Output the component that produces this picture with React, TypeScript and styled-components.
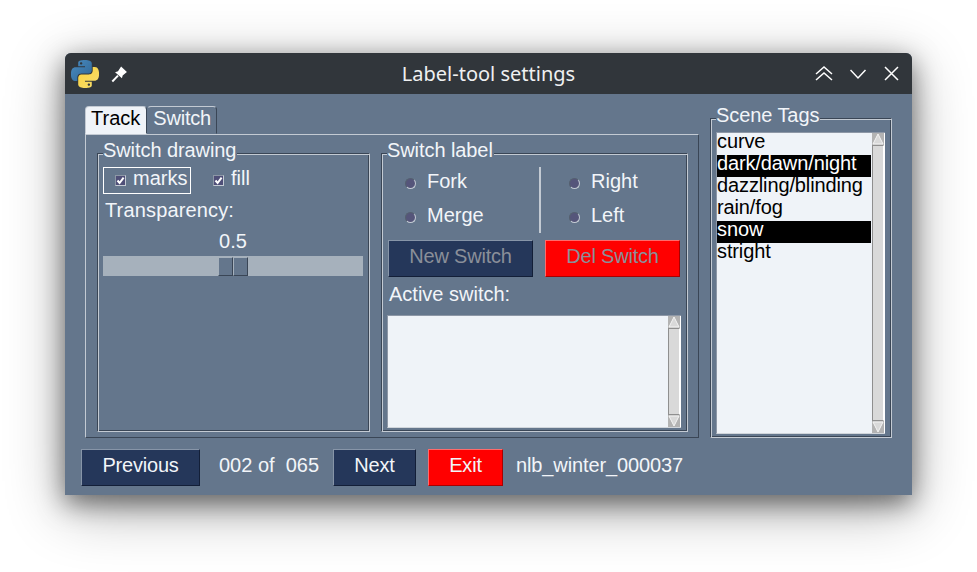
import React from 'react';
import styled, { createGlobalStyle } from 'styled-components';

const GlobalStyle = createGlobalStyle`
  html, body {
    margin: 0;
    background: #ffffff;
  }
  * {
    box-sizing: border-box;
  }
`;

const BODY = '#64768c';
const LIGHT = '#c3cad3';
const DARK = '#3a4656';

const Page = styled.div`
  width: 977px;
  height: 572px;
  padding: 53px 0 0 65px;
  overflow: hidden;
  font-family: 'Liberation Sans', Arial, sans-serif;
  font-size: 20px;
  line-height: 22px;
  color: #f2f5f9;
`;

const Window = styled.div`
  width: 847px;
  height: 442px;
  border-radius: 6px 6px 0 0;
  background: ${BODY};
  box-shadow: 0 8px 26px rgba(0, 0, 0, 0.5), 0 14px 60px rgba(0, 0, 0, 0.32);
`;

const TitleBar = styled.div`
  height: 41px;
  display: grid;
  grid-template-columns: 1fr auto 1fr;
  align-items: center;
  padding: 0 13px 0 6px;
  background: #31363b;
  border-radius: 6px 6px 0 0;
`;

const TitleLeft = styled.div`
  display: flex;
  align-items: center;
  gap: 12px;
`;

const TitleText = styled.div`
  margin-left: 7px;
  font-family: 'Noto Sans', sans-serif;
  font-size: 20px;
  color: #eff0f1;
`;

const TitleRight = styled.div`
  display: flex;
  align-items: center;
  justify-content: flex-end;
  gap: 17px;
  color: #ffffff;
`;

const Content = styled.div`
  padding: 12px 20px 9px 16px;
`;

const Main = styled.div`
  display: flex;
  gap: 11px;
  margin-left: 4px;
`;

const Notebook = styled.div`
  width: 614px;
`;

const Tabs = styled.div`
  display: flex;
  height: 28px;
`;

const Tab = styled.div<{ $active?: boolean }>`
  height: 28px;
  padding: 0 ${(p) => (p.$active ? 6 : 5)}px 4px 5px;
  display: flex;
  align-items: center;
  border-radius: 4px 4px 0 0;
  border: 1px solid;
  border-color: ${LIGHT} ${DARK} transparent ${(p) => (p.$active ? LIGHT : 'transparent')};
  background: ${(p) => (p.$active ? '#eff3f8' : BODY)};
  color: ${(p) => (p.$active ? '#000000' : '#f2f5f9')};
  letter-spacing: ${(p) => (p.$active ? 0 : -0.2)}px;
`;

const grooved = `
  border: 1px solid;
  border-color: ${DARK} ${LIGHT} ${LIGHT} ${DARK};
  box-shadow: inset 1px 1px 0 ${LIGHT}, inset -1px -1px 0 ${DARK};
`;

const TabPage = styled.div`
  height: 304px;
  display: flex;
  gap: 11px;
  padding: 18px 10px 5px 11px;
  border: 1px solid;
  border-color: ${LIGHT} ${DARK} ${DARK} ${LIGHT};
`;

const Frame = styled.div<{ $width: number }>`
  position: relative;
  width: ${(p) => p.$width}px;
  ${grooved}
`;

const Legend = styled.div`
  position: absolute;
  top: -15px;
  left: 5px;
  padding: 0 1px 0 0;
  background: ${BODY};
  letter-spacing: -0.08px;
  white-space: nowrap;
`;

const DrawingBody = styled.div`
  padding: 13px 5px 0;
`;

const CheckRow = styled.div`
  display: flex;
  align-items: center;
`;

const CheckFocus = styled.div`
  width: 88px;
  height: 27px;
  display: flex;
  align-items: center;
  gap: 7px;
  padding: 0 0 5px 11px;
  border: 1px solid #ffffff;
`;

const CheckPlain = styled.div`
  display: flex;
  align-items: center;
  gap: 7px;
  height: 27px;
  padding-bottom: 5px;
  margin-left: 22px;
`;

const CheckBox = styled.span`
  width: 11px;
  height: 11px;
  display: flex;
  margin-top: 5px;
  background: #4f4f78;
  border: 1px solid;
  border-color: #8d97a6 #c3cad3 #c3cad3 #8d97a6;
`;

const Caption = styled.div`
  margin: 5px 0 0 2px;
  letter-spacing: 0.15px;
`;

const SliderValue = styled.div`
  width: 260px;
  margin-top: 9px;
  text-align: center;
`;

const SliderTrough = styled.div`
  width: 260px;
  height: 20px;
  margin-top: 4px;
  display: flex;
  justify-content: center;
  align-items: flex-end;
  background: #a6b1bc;
`;

const SliderHalf = styled.div`
  width: 15px;
  height: 19px;
  background: ${BODY};
  border: 1px solid;
  border-color: #a6b1bc ${DARK} ${DARK} #a6b1bc;
`;

const LabelBody = styled.div`
  padding: 13px 0 0 0;
`;

const RadioArea = styled.div`
  display: flex;
  height: 66px;
`;

const RadioColumn = styled.div<{ $width: number; $indent: number }>`
  width: ${(p) => p.$width}px;
  padding: 3px 0 0 ${(p) => p.$indent}px;
  display: flex;
  flex-direction: column;
  gap: 12px;
`;

const RadioItem = styled.div`
  display: flex;
  align-items: center;
  gap: 11px;
`;

const RadioDot = styled.span`
  width: 11px;
  height: 11px;
  margin-top: 4px;
  border-radius: 50%;
  background: #55557a;
  border: 1px solid;
  border-color: #55606f #c3cad3 #c3cad3 #55606f;
`;

const Separator = styled.div`
  width: 2px;
  height: 66px;
  background: #c3cad3;
`;

const ButtonRow = styled.div`
  display: flex;
  gap: 12px;
  margin: 7px 0 0 6px;
`;

const ActionButton = styled.div<{ $tone: 'navy' | 'red'; $width: number; $disabled?: boolean }>`
  width: ${(p) => p.$width}px;
  height: 37px;
  display: flex;
  align-items: center;
  justify-content: center;
  padding-bottom: 5px;
  letter-spacing: -0.2px;
  border: 1px solid;
  border-color: ${(p) =>
    p.$tone === 'red' ? '#ff6b6b #a80000 #a80000 #ff6b6b' : '#8795a8 #131f38 #131f38 #8795a8'};
  background: ${(p) => (p.$tone === 'red' ? '#ff0000' : '#25375a')};
  color: ${(p) => (p.$disabled ? '#8a8f99' : '#f2f5f9')};
`;

const ActiveCaption = styled.div`
  margin: 6px 0 0 7px;
`;

const ActiveBox = styled.div`
  width: 294px;
  height: 113px;
  margin: 10px 0 0 5px;
  display: flex;
  background: #eff3f8;
  border: 1px solid;
  border-color: #8d97a6 transparent #d0d5db #8d97a6;
  border-right: 0;
`;

const BoxFill = styled.div`
  flex: 1;
`;

const ScrollBar = styled.div`
  width: 13px;
  display: flex;
  flex-direction: column;
  background: #aeb0b2;
  border-right: 1px solid #ffffff;
`;

const ScrollArrow = styled.div`
  height: 12px;
  display: flex;
  color: #d9d9d9;
  background: #b3b3b3;
`;

const ScrollThumb = styled.div`
  flex: 1;
  background: #d9d9d9;
  border: 1px solid;
  border-color: #8f8f8f #ffffff #8f8f8f #8f8f8f;
`;

const TagsFrame = styled.div`
  position: relative;
  width: 182px;
  height: 320px;
  margin-top: 12px;
  padding: 13px 6px 3px 5px;
  ${grooved}
`;

const TagsBox = styled.div`
  height: 302px;
  display: flex;
  background: #eff3f8;
  border: 1px solid;
  border-color: #8d97a6 transparent #d0d5db #8d97a6;
  border-right: 0;
`;

const TagList = styled.ul`
  flex: 1;
  margin: 0 1px 0 0;
  padding: 0;
  list-style: none;
  color: #000000;
  letter-spacing: -0.12px;
`;

const TagItem = styled.li<{ $selected?: boolean }>`
  height: 22px;
  line-height: 17px;
  background: ${(p) => (p.$selected ? '#000000' : 'transparent')};
  color: ${(p) => (p.$selected ? '#ffffff' : '#000000')};
  white-space: nowrap;
`;

const BottomBar = styled.div`
  height: 37px;
  margin-top: 11px;
  display: flex;
  align-items: center;
  gap: 12px;
`;

const Counter = styled.div`
  width: 102px;
  margin: 0 0 5px 7px;
  white-space: pre;
`;

const FileName = styled.div`
  margin: 0 0 5px 1px;
  letter-spacing: -0.12px;
`;

const PythonLogo = () => (
  <svg width="28" height="28" viewBox="0 0 24 24">
    <defs>
      <linearGradient id="snakeBlue" x1="0" y1="0" x2="1" y2="1">
        <stop offset="0" stopColor="#4a8cc0" />
        <stop offset="1" stopColor="#2f6595" />
      </linearGradient>
      <linearGradient id="snakeYellow" x1="0" y1="0" x2="1" y2="1">
        <stop offset="0" stopColor="#fbd33f" />
        <stop offset="1" stopColor="#f6dd6e" />
      </linearGradient>
    </defs>
    <path
      fill="url(#snakeBlue)"
      fillRule="evenodd"
      d="M14.25.18l.9.2.73.26.59.3.45.32.34.34.25.34.16.33.1.3.04.26.02.2-.01.13V8.5l-.05.63-.13.55-.21.46-.26.38-.3.31-.33.25-.35.19-.35.14-.33.1-.3.07-.26.04-.21.02H8.77l-.69.05-.59.14-.5.22-.41.27-.33.32-.27.35-.2.36-.15.37-.1.35-.07.32-.04.27-.02.21v3.06H3.17l-.21-.03-.28-.07-.32-.12-.35-.18-.36-.26-.36-.36-.35-.46-.32-.59-.28-.73-.21-.88-.14-1.05-.05-1.23.06-1.22.16-1.04.24-.87.32-.71.36-.57.4-.44.42-.33.42-.24.4-.16.36-.1.32-.05.24-.01h.16l.06.01h8.16v-.83H6.18l-.01-2.75-.02-.37.05-.34.11-.31.17-.28.25-.26.31-.23.38-.2.44-.18.51-.15.58-.12.64-.1.71-.06.77-.04.84-.02 1.27.05zm-6.3 1.98l-.23.33-.08.41.08.41.23.34.33.22.41.09.41-.09.33-.22.23-.34.08-.41-.08-.41-.23-.33-.33-.22-.41-.09-.41.09z"
    />
    <path
      fill="url(#snakeYellow)"
      fillRule="evenodd"
      d="M21.04 6.11l.28.06.32.12.35.18.36.27.36.35.35.47.32.59.28.73.21.88.14 1.04.05 1.23-.06 1.23-.16 1.04-.24.86-.32.71-.36.57-.4.45-.42.33-.42.24-.4.16-.36.09-.32.05-.24.02-.16-.01h-8.22v.82h5.84l.01 2.76.02.36-.05.34-.11.31-.17.29-.25.25-.31.24-.38.2-.44.17-.51.15-.58.13-.64.09-.71.07-.77.04-.84.01-1.27-.04-1.07-.14-.9-.2-.73-.25-.59-.3-.45-.33-.34-.34-.25-.34-.16-.33-.1-.3-.04-.25-.02-.2.01-.13v-5.34l.05-.64.13-.54.21-.46.26-.38.3-.32.33-.24.35-.2.35-.14.33-.1.3-.06.26-.04.21-.02.13-.01h5.84l.69-.05.59-.14.5-.21.41-.28.33-.32.27-.35.2-.36.15-.36.1-.35.07-.32.04-.28.02-.21V6.07h2.09l.14.01zm-6.47 14.25l-.23.33-.08.41.08.41.23.33.33.23.41.08.41-.08.33-.23.23-.33.08-.41-.08-.41-.23-.33-.33-.23-.41-.08-.41.08z"
    />
  </svg>
);

const PinIcon = () => (
  <svg width="17" height="18" viewBox="0 0 16 17">
    <path d="M9.5 1.5 L15 6.5 L11 10 L10.3 12.6 L3.8 6.8 L6.6 6 Z" fill="#ffffff" />
    <path d="M6.6 10 L1.2 15.6" stroke="#ffffff" strokeWidth="1.8" fill="none" />
  </svg>
);

const WindowIcon = ({ d, width }: { d: string; width: number }) => (
  <svg width={width} height="18" viewBox={`0 0 ${width} 18`} fill="none" stroke="currentColor" strokeWidth="1.5">
    <path d={d} />
  </svg>
);

const CheckMark = () => (
  <svg width="9" height="9" viewBox="0 0 9 9">
    <path d="M1.5 4.5 L3.6 7 L7.6 1.6" fill="none" stroke="#ffffff" strokeWidth="2" />
  </svg>
);

const Arrow = ({ up }: { up?: boolean }) => (
  <svg width="12" height="12" viewBox="0 0 12 12">
    <path d={up ? 'M6 1 L11 11 L1 11 Z' : 'M1 1 L11 1 L6 11 Z'} fill="#d9d9d9" stroke="#f4f4f4" strokeWidth="1" />
  </svg>
);

const Scroll = () => (
  <ScrollBar>
    <ScrollArrow>
      <Arrow up />
    </ScrollArrow>
    <ScrollThumb />
    <ScrollArrow>
      <Arrow />
    </ScrollArrow>
  </ScrollBar>
);

const tags = [
  { name: 'curve', selected: false },
  { name: 'dark/dawn/night', selected: true },
  { name: 'dazzling/blinding', selected: false },
  { name: 'rain/fog', selected: false },
  { name: 'snow', selected: true },
  { name: 'stright', selected: false }
];

function App() {
  return (
    <Page>
      <GlobalStyle />
      <Window>
        <TitleBar>
          <TitleLeft>
            <PythonLogo />
            <PinIcon />
          </TitleLeft>
          <TitleText>Label-tool settings</TitleText>
          <TitleRight>
            <WindowIcon width={18} d="M1 9 L9 2 L17 9 M1 15 L9 8 L17 15" />
            <WindowIcon width={17} d="M0.5 5 L8 13 L15.5 5" />
            <WindowIcon width={15} d="M1 2 L14 15 M14 2 L1 15" />
          </TitleRight>
        </TitleBar>
        <Content>
          <Main>
            <Notebook>
              <Tabs>
                <Tab $active>Track</Tab>
                <Tab>Switch</Tab>
              </Tabs>
              <TabPage>
                <Frame $width={273}>
                  <Legend>Switch drawing</Legend>
                  <DrawingBody>
                    <CheckRow>
                      <CheckFocus>
                        <CheckBox>
                          <CheckMark />
                        </CheckBox>
                        marks
                      </CheckFocus>
                      <CheckPlain>
                        <CheckBox>
                          <CheckMark />
                        </CheckBox>
                        fill
                      </CheckPlain>
                    </CheckRow>
                    <Caption>Transparency:</Caption>
                    <SliderValue>0.5</SliderValue>
                    <SliderTrough>
                      <SliderHalf />
                      <SliderHalf />
                    </SliderTrough>
                  </DrawingBody>
                </Frame>
                <Frame $width={307}>
                  <Legend>Switch label</Legend>
                  <LabelBody>
                    <RadioArea>
                      <RadioColumn $width={157} $indent={23}>
                        <RadioItem>
                          <RadioDot />
                          Fork
                        </RadioItem>
                        <RadioItem>
                          <RadioDot />
                          Merge
                        </RadioItem>
                      </RadioColumn>
                      <Separator />
                      <RadioColumn $width={140} $indent={28}>
                        <RadioItem>
                          <RadioDot />
                          Right
                        </RadioItem>
                        <RadioItem>
                          <RadioDot />
                          Left
                        </RadioItem>
                      </RadioColumn>
                    </RadioArea>
                    <ButtonRow>
                      <ActionButton $tone="navy" $width={145} $disabled>
                        New Switch
                      </ActionButton>
                      <ActionButton $tone="red" $width={135} $disabled>
                        Del Switch
                      </ActionButton>
                    </ButtonRow>
                    <ActiveCaption>Active switch:</ActiveCaption>
                    <ActiveBox>
                      <BoxFill />
                      <Scroll />
                    </ActiveBox>
                  </LabelBody>
                </Frame>
              </TabPage>
            </Notebook>
            <TagsFrame>
              <Legend>Scene Tags</Legend>
              <TagsBox>
                <TagList>
                  {tags.map((tag) => (
                    <TagItem key={tag.name} $selected={tag.selected}>
                      {tag.name}
                    </TagItem>
                  ))}
                </TagList>
                <Scroll />
              </TagsBox>
            </TagsFrame>
          </Main>
          <BottomBar>
            <ActionButton $tone="navy" $width={119}>
              Previous
            </ActionButton>
            <Counter>002 of  065</Counter>
            <ActionButton $tone="navy" $width={83}>
              Next
            </ActionButton>
            <ActionButton $tone="red" $width={75}>
              Exit
            </ActionButton>
            <FileName>nlb_winter_000037</FileName>
          </BottomBar>
        </Content>
      </Window>
    </Page>
  );
}

export default App;
